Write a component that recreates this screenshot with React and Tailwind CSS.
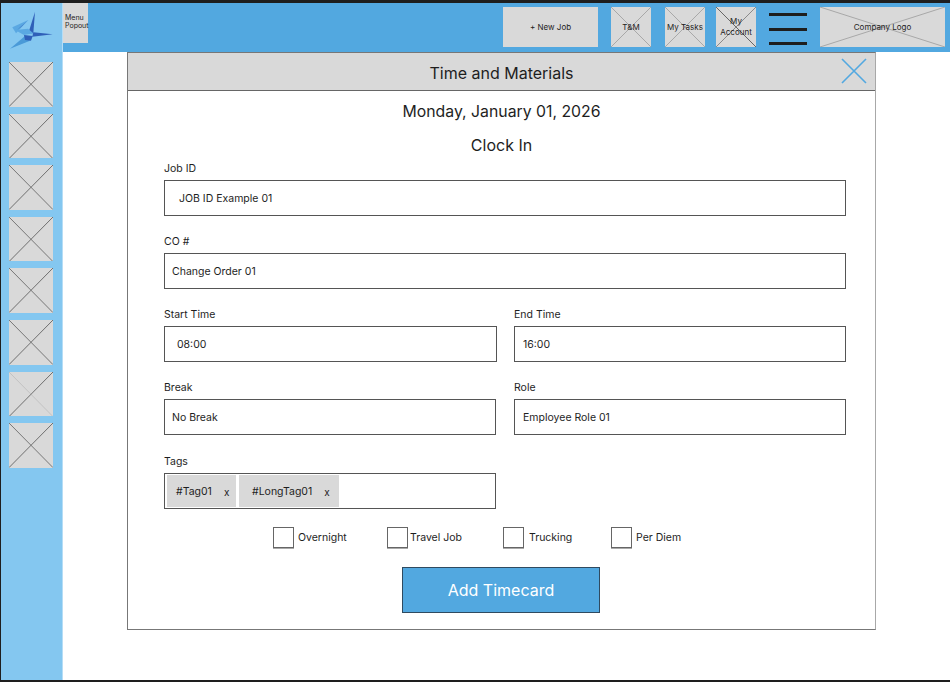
const font = { fontFamily: "Inter, 'Noto Sans', sans-serif" };

function Placeholder({ className = "", label, line = "#8a8a8a", line2, textClass = "" }) {
  return (
    <div className={`relative shrink-0 bg-[#d9d9d9] flex items-center justify-center text-center ${className}`}>
      <svg className="absolute inset-0 w-full h-full" viewBox="0 0 100 100" preserveAspectRatio="none">
        <line x1="0" y1="0" x2="100" y2="100" stroke={line2 || line} strokeWidth="1" vectorEffect="non-scaling-stroke" />
        <line x1="100" y1="0" x2="0" y2="100" stroke={line} strokeWidth="1" vectorEffect="non-scaling-stroke" />
      </svg>
      {label && <span className={`relative text-[8px] leading-[11px] text-[#1e1e1e] ${textClass}`}>{label}</span>}
    </div>
  );
}

function Logo() {
  return (
    <svg width="46" height="40" viewBox="0 0 46 40" className="shrink-0">
      <polygon points="26,0.7 19.3,22.3 24.3,22.3" fill="#2f5fb8" />
      <polygon points="24.3,21.3 43.7,23.3 23.3,25.7" fill="#2f5fb8" />
      <polygon points="1,37.7 16,25 21,29.7" fill="#4a9ad8" />
      <polygon points="3.3,16.3 19.3,9 7,22.3" fill="#5aa8e2" />
      <polygon points="8,19 19.3,9 12,16" fill="#3565bb" />
      <polygon points="6,19 19,17.7 24.3,22.3 15,24" fill="#5aa8e2" />
      <polygon points="15,24 23.7,25 22,29.7 16,29" fill="#2f5fb8" />
    </svg>
  );
}

function Field({ label, value, className = "", inputClass = "pl-2" }) {
  return (
    <div className={className}>
      <div className="text-[10.5px] leading-[13px] text-[#1e1e1e] mb-[5px]">{label}</div>
      <div className={`h-[36px] pt-[2px] border border-[#555] bg-white flex items-center text-[10.5px] text-[#1e1e1e] ${inputClass}`}>{value}</div>
    </div>
  );
}

function Check({ label, className = "" }) {
  return (
    <div className={`flex items-center ${className}`}>
      <div className="w-[21px] h-[21px] border border-[#666] bg-white shadow-[0_1px_0_#aaa]" />
      <span className="text-[10.5px] text-[#1e1e1e]">{label}</span>
    </div>
  );
}

function Tag({ label, pad }) {
  return (
    <div className={`h-[32px] pt-[2px] bg-[#d9d9d9] flex items-center text-[10.5px] text-[#1e1e1e] ${pad}`}>
      <span>{label}</span>
      <span className="ml-[12px] text-[10px]">x</span>
    </div>
  );
}

export default function App() {
  return (
    <div style={font} className="w-[950px] h-[682px] bg-[#1e1e1e] pt-[3px] pl-px pb-[2px] overflow-hidden">
      <div className="flex h-full bg-white">
        <aside className="w-[62px] shrink-0 bg-[#84c7f0] flex flex-col border-r border-[#b5ddf6]">
          <div className="h-[59px] w-full pl-[8px] pt-[8px] shrink-0"><Logo /></div>
          <div className="flex flex-col gap-[7px] pl-[8px]">
            {[0, 1, 2, 3, 4, 5, 6, 7].map((i) => (
              <Placeholder
                key={i}
                className="w-[44px] h-[44.6px]"
                line="#6f6f6f"
                line2={i === 6 ? "#c2c2c2" : "#777"}
              />
            ))}
          </div>
        </aside>
        <div className="flex-1 flex flex-col min-w-0">
          <header className="h-[49px] bg-[#52a8e0] shrink-0 flex items-start">
            <div className="w-[25px] h-[40px] bg-[#d9d9d9] text-[7px] leading-[8px] text-[#1e1e1e] pt-[11px] pl-[2px] shrink-0 whitespace-nowrap">
              Menu<br />Popout
            </div>
            <div className="w-[415px] shrink-0" />
            <div className="w-[95px] h-[40px] mt-[4px] bg-[#d9d9d9] flex items-center justify-center text-[8px] text-[#1e1e1e] shrink-0">+ New Job</div>
            <Placeholder className="w-[40px] h-[40px] mt-[4px] ml-[13px]" label="T&M" line="#a8a8a8" />
            <Placeholder className="w-[40px] h-[40px] mt-[4px] ml-[14px]" label="My Tasks" line="#a8a8a8" />
            <Placeholder className="w-[40px] h-[40px] mt-[4px] ml-[11px]" label={<>My<br />Account</>} line="#8a8a8a" line2="#666" />
            <div className="w-[38px] h-[32px] mt-[10px] ml-[13px] flex flex-col justify-between shrink-0">
              <div className="h-[3px] bg-[#1e1e1e]" />
              <div className="h-[3px] bg-[#1e1e1e]" />
              <div className="h-[3px] bg-[#1e1e1e]" />
            </div>
            <Placeholder className="w-[125px] h-[40px] mt-[4px] ml-[13px]" label="Company Logo" line="#a8a8a8" />
          </header>
          <main className="flex-1 pl-[64px]">
            <section className="w-[749px] h-[578px] border border-[#777] border-r-[#a8a8a8] bg-white">
              <div className="h-[38px] pt-[2px] bg-[#d9d9d9] border-b border-[#666] flex items-center justify-center relative text-[16px] text-[#1e1e1e]">
                Time and Materials
                <svg className="absolute right-[8px] top-[5px]" width="26" height="26" viewBox="0 0 26 26">
                  <path d="M1 1 L25 25 M25 1 L1 25" stroke="#52a8e0" strokeWidth="1.6" fill="none" />
                </svg>
              </div>
              <div className="text-center text-[15.8px] leading-[21px] text-[#1e1e1e] mt-[10px]">Monday, January 01, 2026</div>
              <div className="text-center text-[16px] leading-[20px] text-[#1e1e1e] mt-[13px]">Clock In</div>
              <div className="pl-[36px] pr-[29px] mt-[7px]">
                <Field label="Job ID" value="JOB ID Example 01" inputClass="pl-[14px]" />
                <Field label="CO #" value="Change Order 01" inputClass="pl-[7px]" className="mt-[19px]" />
                <div className="flex mt-[19px]">
                  <Field label="Start Time" value="08:00" inputClass="pl-[12px]" className="w-[333px]" />
                  <Field label="End Time" value="16:00" inputClass="pl-[8px]" className="w-[332px] ml-[17px]" />
                </div>
                <div className="flex mt-[19px]">
                  <Field label="Break" value="No Break" inputClass="pl-[7px]" className="w-[332px]" />
                  <Field label="Role" value="Employee Role 01" inputClass="pl-[8px]" className="w-[332px] ml-[18px]" />
                </div>
                <div className="mt-[20px] w-[332px]">
                  <div className="text-[10.5px] leading-[13px] text-[#1e1e1e] mb-[5px]">Tags</div>
                  <div className="h-[36px] border border-[#555] bg-white flex items-center pl-[2px] gap-[3px]">
                    <Tag label="#Tag01" pad="w-[69px] pl-[9px]" />
                    <Tag label="#LongTag01" pad="w-[100px] pl-[13px]" />
                  </div>
                </div>
              </div>
              <div className="flex mt-[18px] pl-[145px]">
                <Check label={<span className="ml-[3px]">Overnight</span>} className="w-[114px] gap-[1px]" />
                <Check label={<span className="ml-[1px]">Travel Job</span>} className="w-[116px] gap-[1px]" />
                <Check label={<span className="ml-[4px]">Trucking</span>} className="w-[108px] gap-[1px]" />
                <Check label={<span className="ml-[3px]">Per Diem</span>} className="gap-[1px]" />
              </div>
              <div className="flex justify-center mt-[19px] pr-px">
                <button className="w-[198px] h-[46px] bg-[#52a8e0] border border-[#2f4a60] text-white text-[16px]">Add Timecard</button>
              </div>
            </section>
          </main>
        </div>
      </div>
    </div>
  );
}
